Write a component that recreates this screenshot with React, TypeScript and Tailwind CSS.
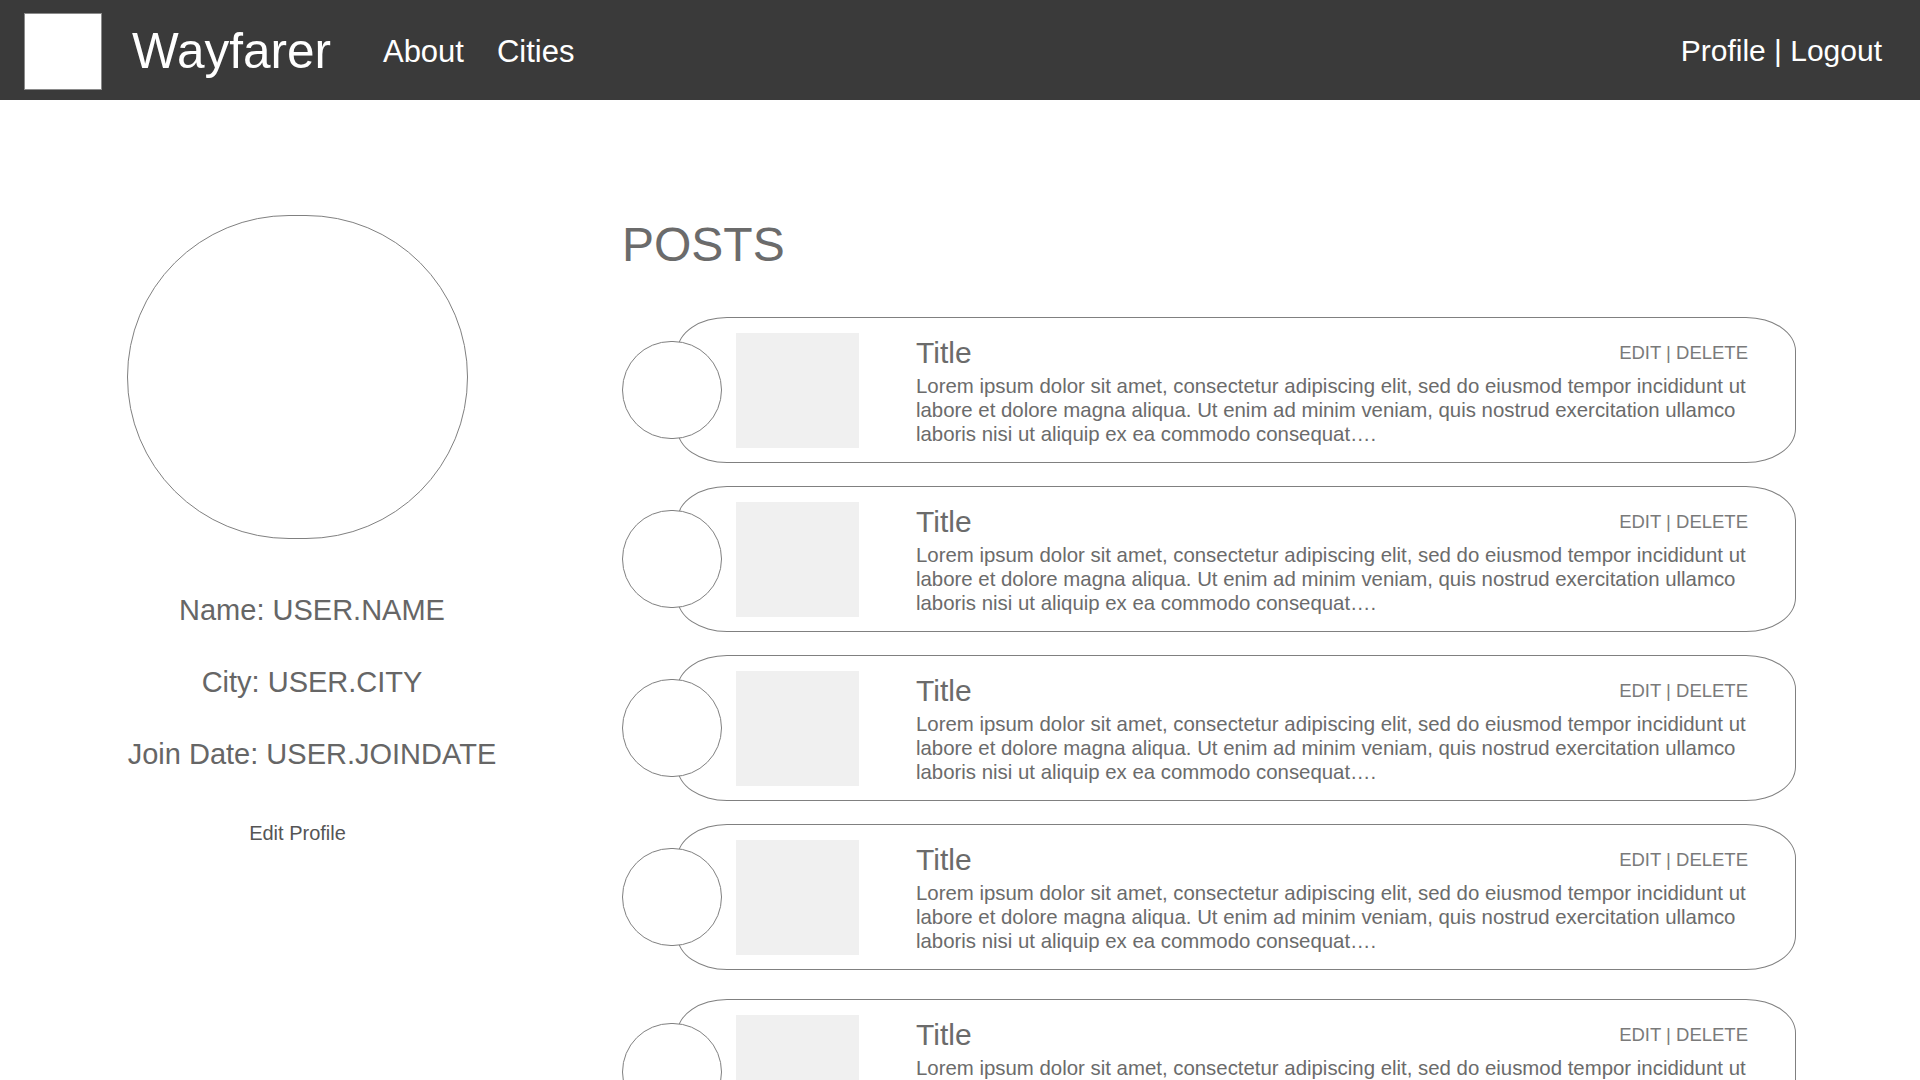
import React from 'react';

const LINES = [
  'Lorem ipsum dolor sit amet, consectetur adipiscing elit, sed do eiusmod tempor incididunt ut',
  'labore et dolore magna aliqua. Ut enim ad minim veniam, quis nostrud exercitation ullamco',
  'laboris nisi ut aliquip ex ea commodo consequat….',
];

const Navbar: React.FC = () => (
  <nav className="h-[100px] bg-[#3a3a3a] flex items-center pt-[2px] pl-[24px] pr-[38px] text-white">
    <div className="w-[78px] h-[77px] bg-white border border-[#8a8a8a] shrink-0" />
    <a className="ml-[30px] text-[49.5px] leading-none">Wayfarer</a>
    <a className="ml-[52px] text-[31px] leading-none">About</a>
    <a className="ml-[33px] text-[31px] leading-none">Cities</a>
    <div className="ml-auto text-[30px] leading-none">Profile | Logout</div>
  </nav>
);

const ProfilePanel: React.FC = () => (
  <aside className="w-[495px] shrink-0 pl-[127px] pt-[115px] text-[#666]">
    <div className="w-[341px] h-[324px] rounded-full border border-[#808080]" />
    <div className="w-[370px] mt-[54px] flex flex-col items-center gap-[37px] text-[29px] leading-[35px]">
      <p>Name: USER.NAME</p>
      <p>City: USER.CITY</p>
      <p>Join Date: USER.JOINDATE</p>
    </div>
    <div className="w-[341px] mt-[49px] text-center text-[20px] leading-[24px] text-[#555]">
      Edit Profile
    </div>
  </aside>
);

const PostCard: React.FC<{ className?: string }> = ({ className = '' }) => (
  <div className={`flex items-center ${className}`}>
    <div className="relative z-10 w-[100px] h-[98px] shrink-0 rounded-full border border-[#808080] bg-white" />
    <div className="-ml-[45px] w-[1119px] h-[146px] rounded-[50px/34px] border border-[#808080] flex items-center pl-[58px] pr-[47px]">
      <div className="w-[123px] h-[115px] bg-[#f0f0f0] shrink-0" />
      <div className="ml-[57px] flex-1 text-[#6b6b6b]">
        <div className="flex items-center justify-between">
          <h3 className="text-[30px] leading-[36px]">Title</h3>
          <span className="text-[18.5px] leading-[36px] text-[#7a7a7a]">EDIT | DELETE</span>
        </div>
        <p className="mt-[3px] text-[20.4px] leading-[24px] whitespace-nowrap">
          {LINES.map((line) => (
            <span key={line} className="block">
              {line}
            </span>
          ))}
        </p>
      </div>
    </div>
  </div>
);

export default function App() {
  return (
    <div className="min-h-screen bg-white font-['Liberation_Sans',Arial,sans-serif]">
      <Navbar />
      <main className="flex">
        <ProfilePanel />
        <section className="ml-[127px] pt-[121px]">
          <h1 className="text-[48px] leading-[48px] text-[#6b6b6b]">POSTS</h1>
          <div className="mt-[48px] flex flex-col gap-[23px]">
            {Array.from({ length: 5 }).map((_, index) => (
              <PostCard key={index} className={index === 4 ? 'mt-[6px]' : ''} />
            ))}
          </div>
        </section>
      </main>
    </div>
  );
}
